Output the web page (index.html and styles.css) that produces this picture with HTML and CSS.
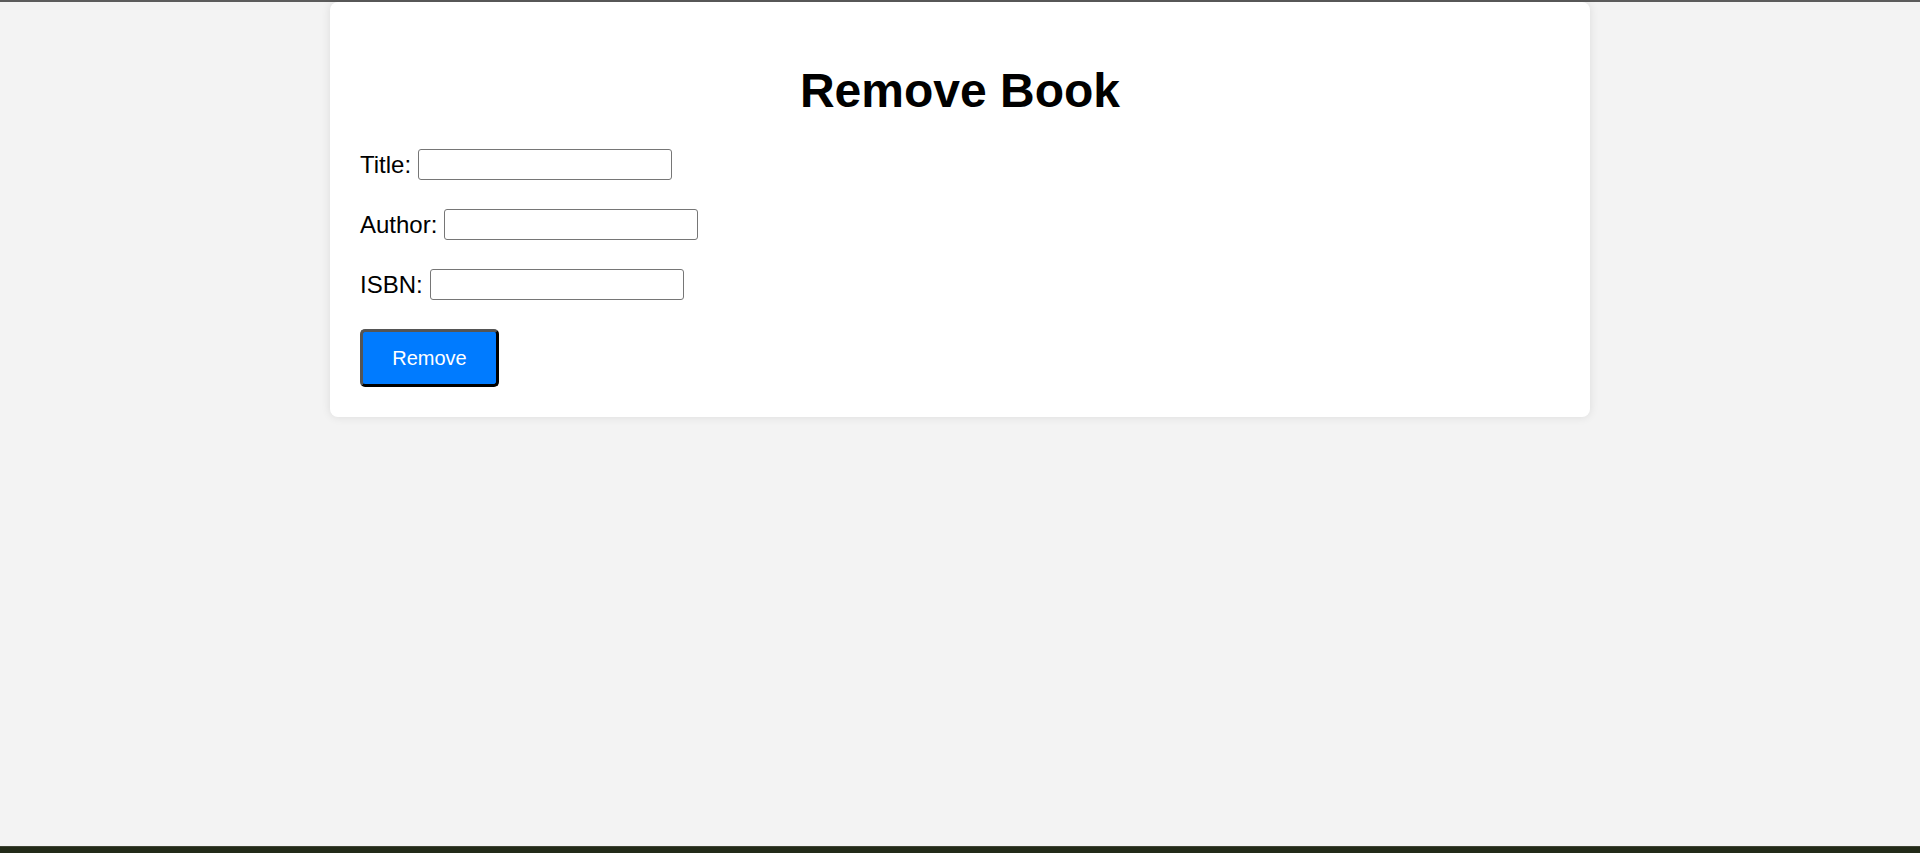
FILE: index.html
```html
<!DOCTYPE html>
<html lang="en">
<head>
<meta charset="utf-8">
<title>Remove Book</title>
<link rel="stylesheet" href="styles.css">
</head>
<body>
<div class="topbar"></div>
<main class="page">
  <div class="card">
    <h1 class="heading">Remove Book</h1>
    <form class="form">
      <div class="row">
        <label class="label" for="title">Title:</label>
        <input class="field" id="title" type="text">
      </div>
      <div class="row">
        <label class="label" for="author">Author:</label>
        <input class="field" id="author" type="text">
      </div>
      <div class="row">
        <label class="label" for="isbn">ISBN:</label>
        <input class="field" id="isbn" type="text">
      </div>
      <button class="btn" type="button">Remove</button>
    </form>
  </div>
</main>
<div class="bottombar"></div>
</body>
</html>
```
FILE: styles.css
```css
html, body {
  margin: 0;
  height: 100%;
}
body {
  display: flex;
  flex-direction: column;
  background: #f3f3f3;
  font-family: "Liberation Sans", Arial, sans-serif;
  color: #000;
}
.topbar {
  height: 2px;
  background: #5b5b5b;
  flex: none;
}
.page {
  flex: 1;
  display: flex;
  justify-content: center;
  align-items: flex-start;
}
.card {
  width: 1200px;
  padding: 30px;
  background: #fff;
  border-radius: 8px;
  box-shadow: 0 0 10px rgba(0, 0, 0, 0.1);
}
.heading {
  margin: 31px 0 31px;
  font-size: 48px;
  font-weight: bold;
  text-align: center;
  line-height: 55px;
}
.form {
  display: flex;
  flex-direction: column;
  align-items: flex-start;
}
.row {
  display: flex;
  align-items: center;
  gap: 7px;
  margin-bottom: 29px;
}
.label {
  font-size: 24px;
}
.field {
  box-sizing: border-box;
  width: 254px;
  height: 31px;
  margin: 0;
  border: 1px solid #767676;
  border-radius: 3px;
  background: #fff;
  font-size: 16px;
  padding: 2px 4px;
}
.btn {
  box-sizing: border-box;
  width: 139px;
  height: 58px;
  margin: 0;
  padding: 0;
  background: #007bff;
  color: #fff;
  font-family: "Liberation Sans", Arial, sans-serif;
  font-size: 20px;
  border-style: solid;
  border-width: 3px;
  border-color: #555 #000 #000 #555;
  border-radius: 5px;
}
.bottombar {
  flex: none;
  height: 6px;
  background: #222a18;
  border-top: 1px solid #3e4334;
}
```
